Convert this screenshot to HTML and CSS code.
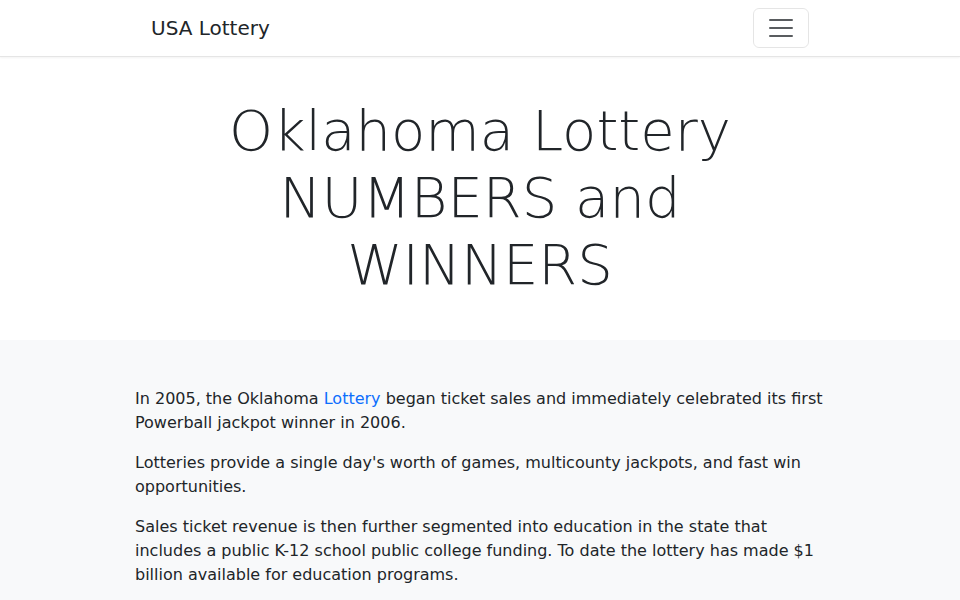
FILE: index.html
```html
<!DOCTYPE html>
<html lang="en">
<head>
    <meta charset="UTF-8">
    <meta name="viewport" content="width=device-width, initial-scale=1.0">
    <title>Oklahoma Lottery NUMBERS and WINNERS</title>
    <link rel="stylesheet" href="styles.css">
</head>
<body>

    <!-- Top Navbar -->
    <nav class="navbar">
        <div class="nav-inner">
            <a class="brand" href="#">USA Lottery</a>
            <button class="toggler" type="button" aria-label="Toggle navigation">
                <svg class="toggler-icon" viewBox="0 0 30 30" width="30" height="30">
                    <path stroke="rgba(33,37,41,0.75)" stroke-linecap="round" stroke-miterlimit="10" stroke-width="2" d="M4 7h22M4 15h22M4 23h22"/>
                </svg>
            </button>
        </div>
    </nav>

    <!-- Page Heading -->
    <header class="hero">
        <h1 class="hero-title">Oklahoma Lottery NUMBERS and WINNERS</h1>
    </header>

    <!-- Intro Text -->
    <section class="intro">
        <div class="container">
            <p>In 2005, the Oklahoma <a href="#">Lottery</a> began ticket sales and immediately celebrated its first Powerball jackpot winner in 2006.</p>
            <p>Lotteries provide a single day's worth of games, multicounty jackpots, and fast win opportunities.</p>
            <p>Sales ticket revenue is then further segmented into education in the state that includes a public K-12 school public college funding. To date the lottery has made $1 billion available for education programs.</p>
        </div>
    </section>

</body>
</html>
```

FILE: styles.css
```css
/* General */
body {
    margin: 0;
    font-family: "DejaVu Sans", sans-serif;
    font-size: 16px;
    line-height: 1.5;
    color: #212529;
    background: #fff;
}

a {
    color: #0d6efd;
    text-decoration: none;
}

.container {
    max-width: 690px;
    margin: 0 auto;
    padding: 0 15px;
}

/* Navbar */
.navbar {
    background: #fff;
    border-bottom: 1px solid #e5e5e5;
    box-shadow: 0 1px 2px rgba(0, 0, 0, 0.05);
    padding: 8px 0;
}

.nav-inner {
    max-width: 658px;
    margin: 0 auto;
    display: flex;
    align-items: center;
    justify-content: space-between;
}

.brand {
    color: #212529;
    font-size: 20px;
    line-height: 30px;
    padding: 5px 0;
}

.toggler {
    width: 56px;
    height: 40px;
    padding: 4px 12px;
    background: transparent;
    border: 1px solid rgba(0, 0, 0, 0.1);
    border-radius: 6px;
    display: flex;
    align-items: center;
    justify-content: center;
}

.toggler-icon {
    display: block;
}

/* Heading */
.hero {
    padding: 40px 12px 41px;
    text-align: center;
}

.hero-title {
    max-width: 580px;
    margin: 0 auto;
    font-size: 56px;
    font-weight: 300;
    line-height: 1.2;
}

/* Intro */
.intro {
    background: #f8f9fa;
    padding: 47px 0 48px;
}

.intro p {
    margin: 0 0 16px;
}
```
